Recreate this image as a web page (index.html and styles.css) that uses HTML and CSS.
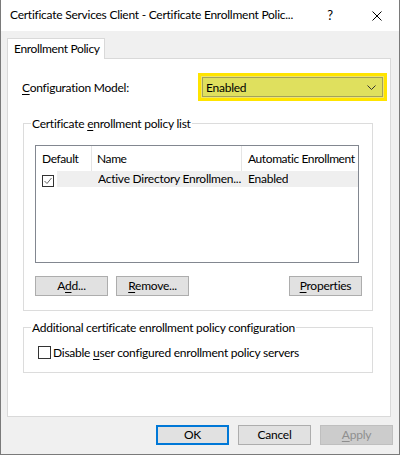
FILE: index.html
```html
<!DOCTYPE html>
<html>
<head>
<meta charset="utf-8">
<link rel="stylesheet" href="styles.css">
</head>
<body>
<div class="window">
  <div class="titlebar">
    <div class="title">Certificate Services Client - Certificate Enrollment Polic...</div>
    <div class="tbtn help">?</div>
    <div class="tbtn close"><svg width="10" height="10" viewBox="0 0 10 10"><path d="M0.5 0.5L9.5 9.5M9.5 0.5L0.5 9.5" stroke="#000" stroke-width="1" fill="none"/></svg></div>
  </div>
  <div class="client">
    <div class="tabs"><div class="tab">Enrollment Policy</div></div>
    <div class="panel">
      <div class="config">
        <span class="config-label"><u>C</u>onfiguration Model:</span>
        <div class="combo">
          <span class="combo-text">Enabled</span>
          <svg class="chev" width="9" height="5" viewBox="0 0 9 5"><polyline points="0.5,0.5 4.5,4.5 8.5,0.5" fill="none" stroke="#333" stroke-width="1"/></svg>
        </div>
      </div>
      <div class="group g1">
        <div class="group-label">Certificate <u>e</u>nrollment policy list</div>
        <div class="list">
          <div class="lv-head">
            <div class="hcol c1">Default</div>
            <div class="hcol c2">Name</div>
            <div class="hcol c3">Automatic Enrollment</div>
          </div>
          <div class="lv-row">
            <div class="chk-cell"><span class="chk lv-chk"><svg width="10" height="10" viewBox="0 0 10 10"><polyline points="1.5,5 4,7.5 8.5,2" fill="none" stroke="#666" stroke-width="1"/></svg></span></div>
            <div class="sel">
              <div class="cell name">Active Directory Enrollmen...</div>
              <div class="cell auto">Enabled</div>
            </div>
          </div>
        </div>
        <div class="btnrow">
          <button class="btn">A<u>d</u>d...</button>
          <button class="btn"><u>R</u>emove...</button>
          <span class="spacer"></span>
          <button class="btn"><u>P</u>roperties</button>
        </div>
      </div>
      <div class="group g2">
        <div class="group-label">Additional certificate enrollment policy configuration</div>
        <div class="check-row"><span class="chk"></span><span>Disable <u>u</u>ser configured enrollment policy servers</span></div>
      </div>
    </div>
    <div class="footer">
      <button class="btn default">OK</button>
      <button class="btn">Cancel</button>
      <button class="btn disabled"><u>A</u>pply</button>
    </div>
  </div>
</div>
</body>
</html>
```
FILE: styles.css
```css
html, body {
  margin: 0;
  padding: 0;
  background: #fff;
}
body {
  font-family: Lato, "Noto Sans", sans-serif;
  font-size: 12px;
  letter-spacing: -0.25px;
  color: #000;
}
u {
  text-decoration: underline;
  text-underline-offset: 2px;
}
.window {
  width: 400px;
  height: 455px;
  box-sizing: border-box;
  border: 1px solid #7a7a7a;
  border-top: none;
  background: #f0f0f0;
  display: flex;
  flex-direction: column;
}
.titlebar {
  height: 31px;
  flex-shrink: 0;
  background: #fff;
  display: flex;
  align-items: center;
}
.title {
  flex: 1;
  padding-left: 9px;
  white-space: nowrap;
  overflow: hidden;
  line-height: 16px;
  padding-bottom: 1px;
}
.tbtn {
  width: 46px;
  height: 31px;
  display: flex;
  align-items: center;
  justify-content: center;
}
.help {
  font-size: 13px;
  padding-bottom: 1px;
  box-sizing: border-box;
}
.close {
  padding-left: 2px;
  box-sizing: border-box;
}
.client {
  flex: 1;
  display: flex;
  flex-direction: column;
}
.tabs {
  display: flex;
  padding-left: 6px;
  margin-top: 7px;
}
.tab {
  position: relative;
  z-index: 1;
  height: 21px;
  box-sizing: border-box;
  border: 1px solid #d9d9d9;
  border-bottom: none;
  background: #fff;
  margin-bottom: -1px;
  padding: 0 4px 0 6px;
  line-height: 19px;
  letter-spacing: -0.35px;
}
.panel {
  margin-left: 6px;
  width: 384px;
  height: 359px;
  box-sizing: border-box;
  border: 1px solid #d9d9d9;
  background: #fff;
}
.config {
  display: flex;
  align-items: center;
  margin: 14px 0 0 14px;
}
.config-label {
  width: 176px;
}
.combo {
  width: 189px;
  height: 28px;
  box-sizing: border-box;
  border: 3px solid #ffe400;
  box-shadow: inset 0 0 0 1px #f0e56a, inset 0 0 0 2px #a2a25c;
  background: #dfe05e;
  display: flex;
  align-items: center;
  padding: 0 8px 0 5px;
}
.combo-text {
  flex: 1;
}
.group {
  border: 1px solid #dcdcdc;
  width: 350px;
  box-sizing: border-box;
  margin-left: 15px;
}
.g1 {
  margin-top: 22px;
  padding: 0 10px 14px 11px;
}
.g2 {
  margin-top: 16px;
  padding: 0 10px 12px 14px;
}
.group-label {
  display: table;
  margin: -8px 0 0 -4px;
  padding: 0 1px;
  background: #fff;
  line-height: 15px;
}
.g2 .group-label {
  margin-left: -7px;
}
.list {
  margin-top: 14px;
  width: 324px;
  height: 118px;
  box-sizing: border-box;
  border: 1px solid #828790;
}
.lv-head {
  display: flex;
  height: 25px;
}
.hcol {
  box-sizing: border-box;
  line-height: 25px;
  padding-left: 6px;
  white-space: nowrap;
  letter-spacing: -0.4px;
}
.hcol.c1 {
  width: 56px;
  border-right: 1px solid #e5e5e5;
}
.hcol.c2 {
  width: 150px;
  border-right: 1px solid #e5e5e5;
  padding-left: 5px;
}
.hcol.c3 {
  flex: 1;
}
.lv-row {
  display: flex;
  height: 16px;
}
.chk-cell {
  width: 21px;
  padding-left: 6px;
  box-sizing: border-box;
  padding-top: 4px;
}
.chk {
  display: inline-block;
  width: 13px;
  height: 13px;
  box-sizing: border-box;
  border: 1px solid #333;
  background: #fff;
  flex-shrink: 0;
}
.lv-chk {
  width: 12px;
  height: 12px;
  border-color: #333;
  display: block;
}
.lv-chk svg {
  display: block;
}
.sel {
  flex: 1;
  display: flex;
  background: #efefef;
  line-height: 16px;
  padding-left: 41px;
}
.cell {
  white-space: nowrap;
  overflow: hidden;
}
.name {
  width: 144px;
}
.auto {
  padding-left: 6px;
}
.btnrow {
  display: flex;
  margin-top: 13px;
  gap: 8px;
}
.spacer {
  flex: 1;
}
.btn {
  font: inherit;
  letter-spacing: inherit;
  color: #000;
  width: 73px;
  height: 20px;
  box-sizing: border-box;
  border: 1px solid #adadad;
  background: #e1e1e1;
  padding: 0;
  margin: 0;
  line-height: 16px;
}
.check-row {
  display: flex;
  align-items: center;
  margin-top: 9px;
  height: 16px;
  gap: 2px;
}
.footer {
  display: flex;
  justify-content: flex-end;
  gap: 9px;
  margin-top: 8px;
  padding-right: 6px;
}
.btn.default {
  border: 2px solid #0078d7;
}
.btn.disabled {
  background: #cccccc;
  border-color: #bfbfbf;
  color: #8f8f8f;
}
```
